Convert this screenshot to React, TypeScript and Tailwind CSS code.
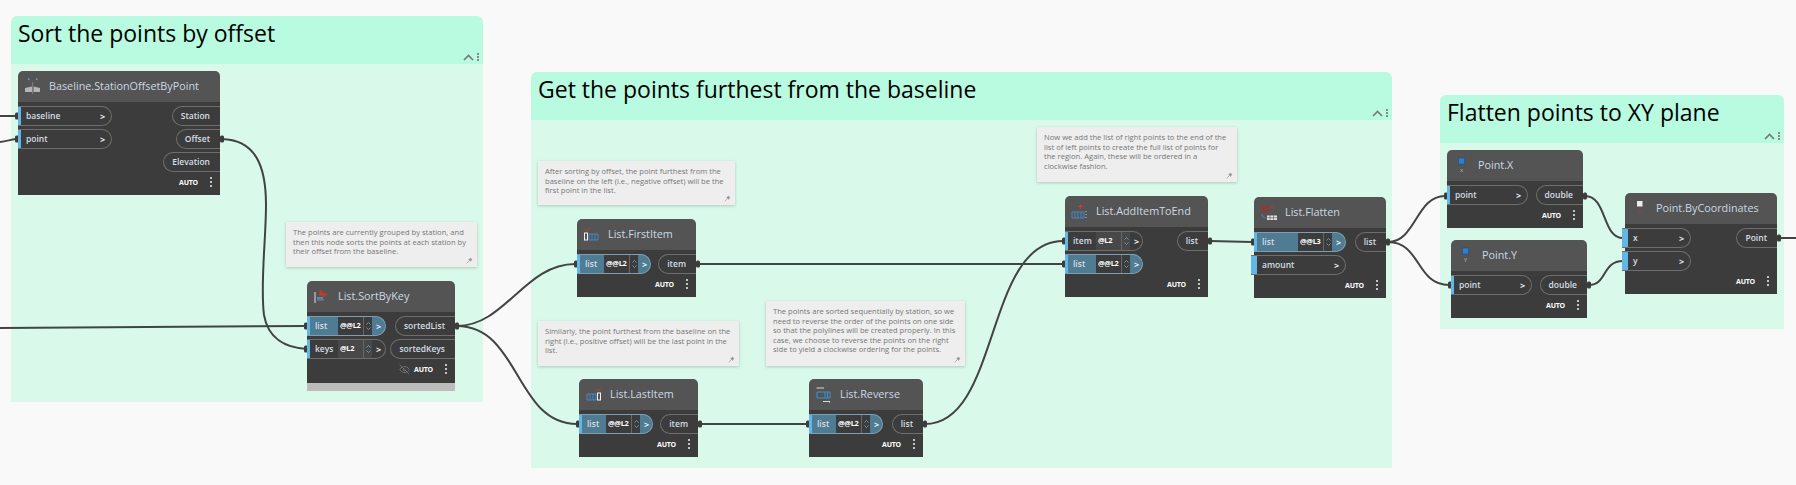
// Dynamo graph canvas — groups, notes, nodes and wires
import type { ReactNode } from 'react';
import { EyeOff } from 'lucide-react';

const UI_FONT = "font-['Open_Sans','Noto_Sans',sans-serif]";

// ─── Groups ────────────────────────────────────────
function Group({ title, className }: { title: string; className: string }) {
  return (
    <section className={`absolute flex flex-col ${className}`}>
      <header className="flex h-[48px] shrink-0 flex-col justify-between rounded-t-[6px] bg-[#b8fbe0] pl-[7px] pr-[4px] pb-[3px]">
        <h2 className="mt-[2px] whitespace-nowrap text-[23px] leading-[31px] text-black">{title}</h2>
        <div className="flex items-center justify-end gap-[3px]">
          <svg width="11" height="7" viewBox="0 0 11 7" className="text-[#777]">
            <path d="M1 6 L5.5 1.5 L10 6" fill="none" stroke="currentColor" strokeWidth="1.6" />
          </svg>
          <div className="flex flex-col gap-[1px]">
            <i className="h-[2px] w-[2px] bg-[#888]" />
            <i className="h-[2px] w-[2px] bg-[#888]" />
            <i className="h-[2px] w-[2px] bg-[#888]" />
          </div>
        </div>
      </header>
      <div className="flex-1 bg-[#d9f9eb]" />
    </section>
  );
}

// ─── Notes ─────────────────────────────────────────
function Note({ lines, className }: { lines: string[]; className: string }) {
  return (
    <div className={`absolute bg-[#eeeeee] pl-[7px] pt-[6px] text-[7.6px] leading-[9.6px] text-[#767676] shadow-[0_1px_3px_rgba(0,0,0,0.2)] ${className}`}>
      {lines.map((line) => (
        <div key={line} className="whitespace-nowrap">{line}</div>
      ))}
      <svg width="7" height="7" viewBox="0 0 7 7" className="absolute bottom-[3px] right-[4px]">
        <path d="M4.2 0.6 L6.4 2.8 L5.6 3.2 L4.6 4.8 L2.2 2.4 L3.8 1.4 Z" fill="#9a9a9a" />
        <path d="M3.2 3.8 L0.6 6.4" stroke="#9a9a9a" strokeWidth="0.7" />
      </svg>
    </div>
  );
}

// ─── Ports ─────────────────────────────────────────
type InPort = {
  label: string;
  w: string;
  level?: string;
  on?: boolean;
  labelW?: string;
  stub?: boolean;
};

function Spinner() {
  return (
    <div className="flex h-full w-[9px] flex-col items-center justify-center gap-[2px] border-l border-[#666]">
      <svg width="5" height="3" viewBox="0 0 5 3"><path d="M0.5 2.5 L2.5 0.5 L4.5 2.5" fill="none" stroke="#6ba8c7" strokeWidth="0.8" /></svg>
      <svg width="5" height="3" viewBox="0 0 5 3"><path d="M0.5 0.5 L2.5 2.5 L4.5 0.5" fill="none" stroke="#6ba8c7" strokeWidth="0.8" /></svg>
    </div>
  );
}

function InputPort({ port }: { port: InPort }) {
  const { label, w, level, on, labelW, stub } = port;
  return (
    <div
      className={`flex h-[20px] items-center rounded-r-[10px] border border-l-0 text-[8.5px] font-semibold leading-none text-[#d6dee6] ${on ? 'border-[#7d9fb0] bg-[#4f7c93]' : 'border-[#6e6e6e]'} ${stub ? '-ml-[3px]' : ''} ${w}`}
    >
      <div className={`h-full shrink-0 bg-[#62b7e6] ${stub ? 'w-[6px]' : 'w-[3px]'}`} />
      <div className={`shrink-0 whitespace-nowrap pl-[5px] ${labelW ?? 'flex-1'}`}>{label}</div>
      {level && (
        <div className={`flex h-full items-center ${on ? 'bg-[#3c3c3c]' : 'bg-[#484848]'}`}>
          <span className="w-[25px] whitespace-nowrap pl-[2px] text-[7.4px] font-bold tracking-[-0.3px] text-white">{level}</span>
          <Spinner />
        </div>
      )}
      <span className={`shrink-0 text-[9px] font-bold text-[#e6edf2] ${level ? 'w-[13px] pl-[4px]' : 'w-[11px]'}`}>&gt;</span>
    </div>
  );
}

function OutputPort({ label }: { label: string }) {
  return (
    <div className="flex h-[20px] items-center whitespace-nowrap rounded-l-[10px] border border-r-0 border-[#6e6e6e] pl-[8px] pr-[10px] text-[8.5px] font-semibold leading-none text-[#d6dee6]">
      {label}
    </div>
  );
}

// ─── Node ──────────────────────────────────────────
function DynNode({
  title,
  icon,
  inputs,
  outputs,
  className,
  frozen,
}: {
  title: string;
  icon: ReactNode;
  inputs: InPort[];
  outputs: string[];
  className: string;
  frozen?: boolean;
}) {
  return (
    <div className={`absolute flex flex-col ${className}`}>
      <div className="flex h-[31px] items-center rounded-t-[5px] bg-[#545454] pl-[6px]">
        <div className="mr-[7px] flex h-[18px] w-[18px] shrink-0 items-center justify-center">{icon}</div>
        <span className="whitespace-nowrap text-[10.8px] leading-none text-[#ccd8e3]">{title}</span>
      </div>
      <div className="flex justify-between bg-[#3c3c3c] pt-[4px]">
        <div className="flex flex-col gap-[3px]">
          {inputs.map((p) => (
            <InputPort key={p.label} port={p} />
          ))}
        </div>
        <div className="flex flex-col items-end gap-[3px]">
          {outputs.map((o) => (
            <OutputPort key={o} label={o} />
          ))}
        </div>
      </div>
      <div className={`flex justify-end gap-[12px] bg-[#3c3c3c] pr-[8px] pt-[4px] ${frozen ? 'h-[24px]' : 'h-[23px]'}`}>
        <div className="flex h-[12px] items-center">
          {frozen && <EyeOff size={11} strokeWidth={1} className="mr-[4px] text-[#aaa]" />}
          <span className="text-[7px] font-bold leading-none tracking-[-0.2px] text-white">AUTO</span>
        </div>
        <div className="flex h-[12px] flex-col items-center justify-center gap-[2px]">
          <i className="h-[2px] w-[2px] bg-[#c4c4c4]" />
          <i className="h-[2px] w-[2px] bg-[#c4c4c4]" />
          <i className="h-[2px] w-[2px] bg-[#c4c4c4]" />
        </div>
      </div>
      {frozen && <div className="h-[8px] bg-[#bcbcbc]" />}
    </div>
  );
}

// ─── Node icons ────────────────────────────────────
const IconBaseline = (
  <svg width="18" height="18" viewBox="0 0 18 18">
    <rect x="4" y="0.5" width="1.6" height="1.6" fill="#4aa3df" />
    <rect x="12" y="0.5" width="1.6" height="1.6" fill="#4aa3df" />
    <path d="M1 10 L8 8.5 V14 H1 Z M9.5 8.5 L16 10 V14 H9.5 Z" fill="#b5b5b5" />
    <path d="M8.7 4 V16" stroke="#999" strokeWidth="0.7" />
  </svg>
);
const IconSort = (
  <svg width="18" height="18" viewBox="0 0 18 18">
    <path d="M2 4 V15" stroke="#ddd" strokeWidth="1" />
    <path d="M7 1.5 L11 5 L15 6.5 L11 9 L6 7 Z" fill="#c0392f" />
    <rect x="4" y="9" width="6" height="2" fill="#3f8fd0" />
    <path d="M4 12 H11" stroke="#8a8a8a" strokeWidth="1" />
  </svg>
);
const IconFirst = (
  <svg width="18" height="18" viewBox="0 0 18 18">
    <path d="M2 3 L4 5 L7 1.5" fill="none" stroke="#c0392f" strokeWidth="0.9" />
    <rect x="1.5" y="7" width="3" height="7" fill="none" stroke="#f1f1f1" strokeWidth="1" />
    <path d="M6 8 H15 V14 H6 Z M9 8 V14 M12 8 V14" fill="none" stroke="#3f8fd0" strokeWidth="0.9" />
  </svg>
);
const IconLast = (
  <svg width="18" height="18" viewBox="0 0 18 18">
    <path d="M11 3 L13 5 L16 1.5" fill="none" stroke="#c0392f" strokeWidth="0.9" />
    <rect x="12.5" y="7" width="3" height="7" fill="none" stroke="#f1f1f1" strokeWidth="1" />
    <path d="M2 8 H11 V14 H2 Z M5 8 V14 M8 8 V14" fill="none" stroke="#3f8fd0" strokeWidth="0.9" />
  </svg>
);
const IconReverse = (
  <svg width="18" height="18" viewBox="0 0 18 18">
    <path d="M1.5 2 H9" stroke="#e8e8e8" strokeWidth="0.9" />
    <path d="M2 6 H15 V12 H2 Z M10 6 V12 M12.5 6 V12" fill="none" stroke="#3f8fd0" strokeWidth="1" />
    <path d="M8 15.5 H14" stroke="#e8e8e8" strokeWidth="0.9" />
    <rect x="14" y="15" width="1" height="1.5" fill="#e8e8e8" />
  </svg>
);
const IconAdd = (
  <svg width="18" height="18" viewBox="0 0 18 18">
    <path d="M9.5 1 V6 M7 3.5 H12" stroke="#d13a32" strokeWidth="1.2" />
    <path d="M1 9 H13 V15 H1 Z M4 9 V15 M7 9 V15 M10 9 V15" fill="none" stroke="#3f8fd0" strokeWidth="0.9" />
    <path d="M15 8 V9 M15 11 V12 M15 14 V15" stroke="#bbb" strokeWidth="1" />
  </svg>
);
const IconFlatten = (
  <svg width="18" height="18" viewBox="0 0 18 18">
    <path d="M1 2 H9 V9 H1 Z" fill="#8d3a36" />
    <path d="M1 4.5 H9 M1 7 H9" stroke="#545454" strokeWidth="0.7" />
    <path d="M11 4 V2 H14 V4" fill="none" stroke="#a8433d" strokeWidth="0.8" />
    <path d="M2 10 C2 13 4 14 6 14" fill="none" stroke="#3f8fd0" strokeWidth="0.9" />
    <path d="M7 11.5 H17 V16 H7 Z" fill="#e2e2e2" />
    <path d="M10 11.5 V16 M13.5 11.5 V16 M7 13.7 H17" stroke="#545454" strokeWidth="0.6" />
  </svg>
);
const IconPointX = (
  <svg width="18" height="18" viewBox="0 0 18 18">
    <rect x="5.5" y="1" width="6" height="6" fill="#2f7fd1" stroke="#1d4f86" strokeWidth="0.6" />
    <text x="8.5" y="15" textAnchor="middle" fontSize="6" fill="#bbb">x</text>
  </svg>
);
const IconPointY = (
  <svg width="18" height="18" viewBox="0 0 18 18">
    <rect x="5.5" y="1" width="6" height="6" fill="#2f7fd1" stroke="#1d4f86" strokeWidth="0.6" />
    <text x="8.5" y="15" textAnchor="middle" fontSize="5.5" fill="#bbb">Y</text>
  </svg>
);
const IconPointXY = (
  <svg width="18" height="18" viewBox="0 0 18 18">
    <rect x="6" y="1" width="5.5" height="5.5" fill="#ececec" />
    <text x="9" y="15" textAnchor="middle" fontSize="5" fill="#8a4a46">XY</text>
  </svg>
);

// ─── Wires ─────────────────────────────────────────
const WIRES = [
  'M0 116 H18',
  'M0 142 C8 141 12 139 18 139',
  'M222 139 C255 140 266 165 266 205 C266 240 260 285 264 315 C268 338 285 348 307 349',
  'M0 328 L307 326',
  'M457 326 C505 326 525 264 575 264',
  'M457 326 C520 326 515 424 577 424',
  'M698 264 H1063',
  'M700 424 H807',
  'M925 424 C1000 424 985 241 1063 241',
  'M1210 241 L1252 242',
  'M1388 242 C1416 242 1416 196 1445 196',
  'M1388 242 C1421 242 1416 285 1449 285',
  'M1585 196 C1607 196 1602 238 1623 238',
  'M1589 285 C1607 285 1602 261 1623 261',
  'M1779 238 H1796',
];

const CAPS = [
  [17, 116], [17, 139], [222, 139], [306, 326], [306, 349], [457, 326],
  [576, 264], [698, 264], [578, 424], [700, 424], [808, 424], [925, 424],
  [1064, 241], [1064, 264], [1210, 241], [1253, 242], [1388, 242],
  [1446, 196], [1450, 285], [1585, 196], [1589, 285], [1779, 238],
];

function Wires() {
  return (
    <svg className="absolute inset-0 h-full w-full" viewBox="0 0 1796 485">
      {WIRES.map((d) => (
        <path key={d} d={d} fill="none" stroke="#434343" strokeWidth="2" />
      ))}
      {CAPS.map(([x, y]) => (
        <rect key={`${x}-${y}`} x={x - 2} y={y - 3.5} width="4" height="7" rx="1.5" fill="#3c3c3c" />
      ))}
    </svg>
  );
}

export default function App() {
  return (
    <div className={`relative h-[485px] w-[1796px] overflow-hidden bg-[#f9f9f9] ${UI_FONT}`}>
      <Group title="Sort the points by offset" className="left-[11px] top-[16px] h-[386px] w-[472px]" />
      <Group title="Get the points furthest from the baseline" className="left-[531px] top-[72px] h-[396px] w-[861px]" />
      <Group title="Flatten points to XY plane" className="left-[1440px] top-[95px] h-[234px] w-[344px]" />

      <Note
        className="left-[286px] top-[222px] h-[45px] w-[191px]"
        lines={[
          'The points are currently grouped by station, and',
          'then this node sorts the points at each station by',
          'their offset from the baseline.',
        ]}
      />
      <Note
        className="left-[538px] top-[161px] h-[44px] w-[197px]"
        lines={[
          'After sorting by offset, the point furthest from the',
          'baseline on the left (i.e., negative offset) will be the',
          'first point in the list.',
        ]}
      />
      <Note
        className="left-[538px] top-[321px] h-[45px] w-[201px]"
        lines={[
          'Similarly, the point furthest from the baseline on the',
          'right (i.e., positive offset) will be the last point in the',
          'list.',
        ]}
      />
      <Note
        className="left-[766px] top-[301px] h-[65px] w-[199px]"
        lines={[
          'The points are sorted sequentially by station, so we',
          'need to reverse the order of the points on one side',
          'so that the polylines will be created properly. In this',
          'case, we choose to reverse the points on the right',
          'side to yield a clockwise ordering for the points.',
        ]}
      />
      <Note
        className="left-[1037px] top-[127px] h-[55px] w-[200px]"
        lines={[
          'Now we add the list of right points to the end of the',
          'list of left points to create the full list of points for',
          'the region. Again, these will be ordered in a',
          'clockwise fashion.',
        ]}
      />

      <Wires />

      <DynNode
        className="left-[18px] top-[71px] w-[202px]"
        title="Baseline.StationOffsetByPoint"
        icon={IconBaseline}
        inputs={[
          { label: 'baseline', w: 'w-[94px]' },
          { label: 'point', w: 'w-[94px]' },
        ]}
        outputs={['Station', 'Offset', 'Elevation']}
      />
      <DynNode
        className="left-[307px] top-[281px] w-[148px]"
        title="List.SortByKey"
        icon={IconSort}
        frozen
        inputs={[
          { label: 'list', w: 'w-[79px]', level: '@@L2', on: true, labelW: 'w-[28px]' },
          { label: 'keys', w: 'w-[79px]', level: '@L2', labelW: 'w-[28px]' },
        ]}
        outputs={['sortedList', 'sortedKeys']}
      />
      <DynNode
        className="left-[577px] top-[219px] w-[119px]"
        title="List.FirstItem"
        icon={IconFirst}
        inputs={[{ label: 'list', w: 'w-[74px]', level: '@@L2', on: true, labelW: 'w-[24px]' }]}
        outputs={['item']}
      />
      <DynNode
        className="left-[579px] top-[379px] w-[119px]"
        title="List.LastItem"
        icon={IconLast}
        inputs={[{ label: 'list', w: 'w-[74px]', level: '@@L2', on: true, labelW: 'w-[24px]' }]}
        outputs={['item']}
      />
      <DynNode
        className="left-[809px] top-[379px] w-[114px]"
        title="List.Reverse"
        icon={IconReverse}
        inputs={[{ label: 'list', w: 'w-[74px]', level: '@@L2', on: true, labelW: 'w-[24px]' }]}
        outputs={['list']}
      />
      <DynNode
        className="left-[1065px] top-[196px] w-[143px]"
        title="List.AddItemToEnd"
        icon={IconAdd}
        inputs={[
          { label: 'item', w: 'w-[78px]', level: '@L2', labelW: 'w-[28px]' },
          { label: 'list', w: 'w-[78px]', level: '@@L2', on: true, labelW: 'w-[28px]' },
        ]}
        outputs={['list']}
      />
      <DynNode
        className="left-[1254px] top-[197px] w-[132px]"
        title="List.Flatten"
        icon={IconFlatten}
        inputs={[
          { label: 'list', w: 'w-[92px]', level: '@@L3', on: true, labelW: 'w-[41px]' },
          { label: 'amount', w: 'w-[95px]', stub: true },
        ]}
        outputs={['list']}
      />
      <DynNode
        className="left-[1447px] top-[150px] w-[136px]"
        title="Point.X"
        icon={IconPointX}
        inputs={[{ label: 'point', w: 'w-[81px]' }]}
        outputs={['double']}
      />
      <DynNode
        className="left-[1451px] top-[240px] w-[136px]"
        title="Point.Y"
        icon={IconPointY}
        inputs={[{ label: 'point', w: 'w-[81px]' }]}
        outputs={['double']}
      />
      <DynNode
        className="left-[1625px] top-[193px] w-[152px]"
        title="Point.ByCoordinates"
        icon={IconPointXY}
        inputs={[
          { label: 'x', w: 'w-[69px]', stub: true },
          { label: 'y', w: 'w-[69px]', stub: true },
        ]}
        outputs={['Point']}
      />
    </div>
  );
}
